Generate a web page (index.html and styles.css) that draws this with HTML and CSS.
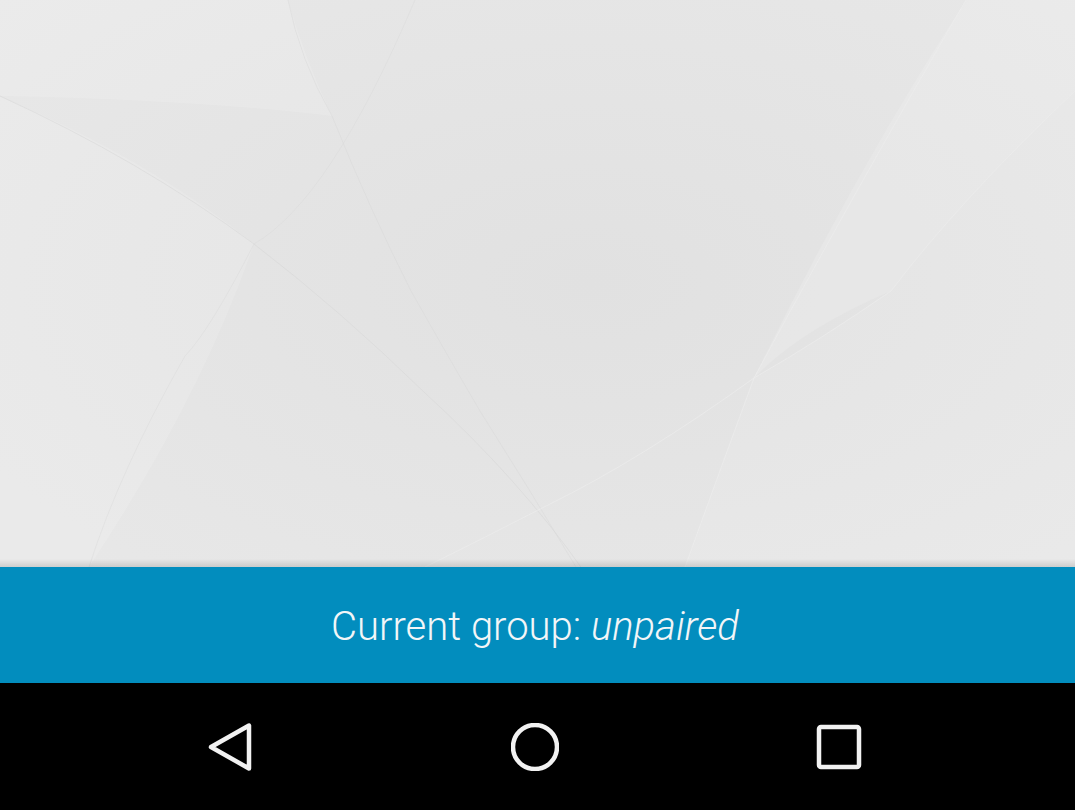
FILE: index.html
```html
<!DOCTYPE html>
<html>
<head>
<meta charset="utf-8">
<link rel="stylesheet" href="styles.css">
</head>
<body>
<div class="screen">
  <div class="wallpaper">
    <svg class="wall-art" viewBox="0 0 1075 567" preserveAspectRatio="none" xmlns="http://www.w3.org/2000/svg">
      <defs>
        <radialGradient id="bg" cx="0.55" cy="0.5" r="0.75">
          <stop offset="0" stop-color="#e1e1e1"/>
          <stop offset="1" stop-color="#e8e8e8"/>
        </radialGradient>
      </defs>
      <rect width="1075" height="567" fill="url(#bg)"/>
      <path d="M0 0 L288 0 Q305 60 332 116 Q200 100 0 96 Z" fill="#ffffff" opacity="0.14"/>
      <path d="M966 0 L1075 0 L1075 91 Q960 200 891 291 Q800 330 754 378 Q850 180 966 0 Z" fill="#ffffff" opacity="0.14"/>
      <path d="M0 96 Q150 160 254 244 Q200 400 89 567 L0 567 Z" fill="#ffffff" opacity="0.12"/>
      <path d="M1075 91 Q960 200 891 291 Q820 340 754 378 Q720 470 685 567 L1075 567 Z" fill="#ffffff" opacity="0.1"/>
      <g fill="none" stroke-width="1">
        <path d="M288 0 Q300 60 332 116 Q370 210 411 291 Q450 360 480 411 Q530 490 576 567" stroke="#d8d8d8" opacity="0.45"/>
        <path d="M415 0 Q330 200 254 244 Q210 330 185 356 Q120 470 89 567" stroke="#dadada" opacity="0.45"/>
        <path d="M0 96 Q140 160 254 244 Q340 310 425 393 Q520 480 583 570" stroke="#d6d6d6" opacity="0.5"/>
        <path d="M966 0 Q850 200 754 378 Q720 470 685 567" stroke="#ededed" opacity="0.7"/>
        <path d="M1075 91 Q960 200 891 291 Q820 340 754 378 Q640 460 548 505 Q480 540 425 567" stroke="#ededed" opacity="0.7"/>
      </g>
    </svg>
  </div>
  <div class="banner">
    <p class="group-label">Current group: <em class="group-name">unpaired</em></p>
  </div>
  <nav class="navbar">
    <div class="nav-btn">
      <svg width="48" height="48" viewBox="0 0 48 48">
        <path d="M42 2.5 L42 45.5 L4 24 Z" fill="none" stroke="#f2f2f2" stroke-width="4.5" stroke-linejoin="round"/>
      </svg>
    </div>
    <div class="nav-btn">
      <svg width="48" height="48" viewBox="0 0 48 48">
        <circle cx="24" cy="24" r="22" fill="none" stroke="#f2f2f2" stroke-width="4.5"/>
      </svg>
    </div>
    <div class="nav-btn">
      <svg width="48" height="48" viewBox="0 0 48 48">
        <rect x="4" y="4" width="40" height="40" rx="2" fill="none" stroke="#f2f2f2" stroke-width="4.5"/>
      </svg>
    </div>
  </nav>
</div>
</body>
</html>
```

FILE: styles.css
```css
html, body {
  margin: 0;
  padding: 0;
  background: #000;
}

.screen {
  width: 1075px;
  height: 810px;
  display: flex;
  flex-direction: column;
  overflow: hidden;
}

.wallpaper {
  height: 567px;
  flex: none;
  position: relative;
  background: #e5e5e5;
}

.wall-art {
  display: block;
  width: 100%;
  height: 100%;
}

.wallpaper::after {
  content: "";
  position: absolute;
  left: 0;
  right: 0;
  bottom: 0;
  height: 8px;
  background: linear-gradient(to bottom, rgba(0,0,0,0), rgba(0,0,0,0.12));
}

.banner {
  height: 116px;
  flex: none;
  background: #028dbe;
  display: flex;
  align-items: center;
  justify-content: center;
  padding-right: 5px;
}

.group-label {
  margin: 0;
  font-family: Roboto, "Liberation Sans", sans-serif;
  font-weight: 300;
  font-size: 40px;
  color: #f2f6f8;
  letter-spacing: 0;
  position: relative;
  top: 1px;
}

.group-name {
  font-style: italic;
}

.navbar {
  flex: 1;
  background: #000;
  display: flex;
  align-items: center;
  justify-content: center;
  gap: 256px;
  padding-right: 5px;
}

.nav-btn {
  width: 48px;
  height: 48px;
}

.nav-btn svg {
  display: block;
}
```
